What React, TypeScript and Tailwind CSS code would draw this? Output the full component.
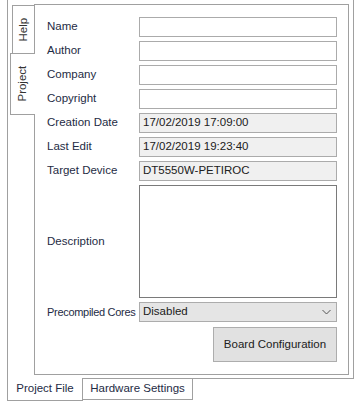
import React from "react";

const rows: { label: string; value: string; readOnly?: boolean }[] = [
  { label: "Name", value: "" },
  { label: "Author", value: "" },
  { label: "Company", value: "" },
  { label: "Copyright", value: "" },
  { label: "Creation Date", value: "17/02/2019 17:09:00", readOnly: true },
  { label: "Last Edit", value: "17/02/2019 19:23:40", readOnly: true },
  { label: "Target Device", value: "DT5550W-PETIROC", readOnly: true },
];

export default function App() {
  return (
    <div
      className="w-[358px] h-[407px] bg-white pl-[7px] text-[11.5px] text-[#1e2b44] overflow-hidden"
      style={{ fontFamily: "'Liberation Sans', Arial, sans-serif" }}
    >
      {/* Outer frame with bottom tabs */}
      <div className="w-[347px] h-[379px] border-l border-r border-b border-[#a0a0a0] flex pt-[4px] pl-[2px]">
        {/* Vertical tabs */}
        <div className="flex flex-col w-[24px] shrink-0">
          <div className="h-[48px] ml-[2px] mt-[1px] border-l border-t border-[#a0a0a0] flex items-center justify-center">
            <span className="-rotate-90 whitespace-nowrap text-[#333]">Help</span>
          </div>
          <div className="h-[62px] w-[25px] border-l border-t border-b border-[#a0a0a0] bg-white relative z-10 flex items-center justify-center">
            <span className="-rotate-90 whitespace-nowrap text-[#333]">Project</span>
          </div>
        </div>

        {/* Panel */}
        <div className="w-[315px] h-[371px] border border-[#a0a0a0] pt-[12px] pl-[12px] pr-[11px] flex flex-col">
          <div className="flex flex-col gap-[4px]">
            {rows.map((r) => (
              <div key={r.label} className="flex items-center">
                <div className="w-[92px] shrink-0 whitespace-nowrap">{r.label}</div>
                <div
                  className={`w-[198px] h-[20px] border border-[#ababab] px-[3px] flex items-center text-[#202020] ${
                    r.readOnly ? "bg-[#f0f0f0]" : "bg-white"
                  }`}
                >
                  {r.value}
                </div>
              </div>
            ))}
            <div className="flex items-center">
              <div className="w-[92px] shrink-0">Description</div>
              <div className="w-[198px] h-[113px] border border-[#7a7a7a] bg-white" />
            </div>
          </div>
          <div className="flex items-center mt-[4px]">
            <div className="w-[92px] shrink-0 whitespace-nowrap text-[11px] tracking-[-0.3px]">Precompiled Cores</div>
            <div className="w-[198px] h-[20px] border border-[#acacac] bg-[#e5e5e5] pl-[3px] pr-[5px] flex items-center justify-between text-[#202020]">
              <span>Disabled</span>
              <svg width="9" height="6" viewBox="0 0 9 6" fill="none">
                <path d="M0.5 1 L4.5 5 L8.5 1" stroke="#555" strokeWidth="1" />
              </svg>
            </div>
          </div>
          <div className="flex justify-end mt-[5px]">
            <div className="w-[124px] h-[35px] border border-[#adadad] bg-[#e1e1e1] flex items-center justify-center text-[#202020]">
              Board Configuration
            </div>
          </div>
        </div>
      </div>

      {/* Bottom tabs */}
      <div className="flex">
        <div className="w-[76px] h-[23px] -mt-px bg-white border-l border-r border-b border-[#a0a0a0] flex items-center justify-center text-[#1e2b44]">
          Project File
        </div>
        <div className="w-[111px] h-[21px] -ml-px border-r border-b border-l border-[#a0a0a0] flex items-center justify-center text-[#1e2b44]">
          Hardware Settings
        </div>
      </div>
    </div>
  );
}
